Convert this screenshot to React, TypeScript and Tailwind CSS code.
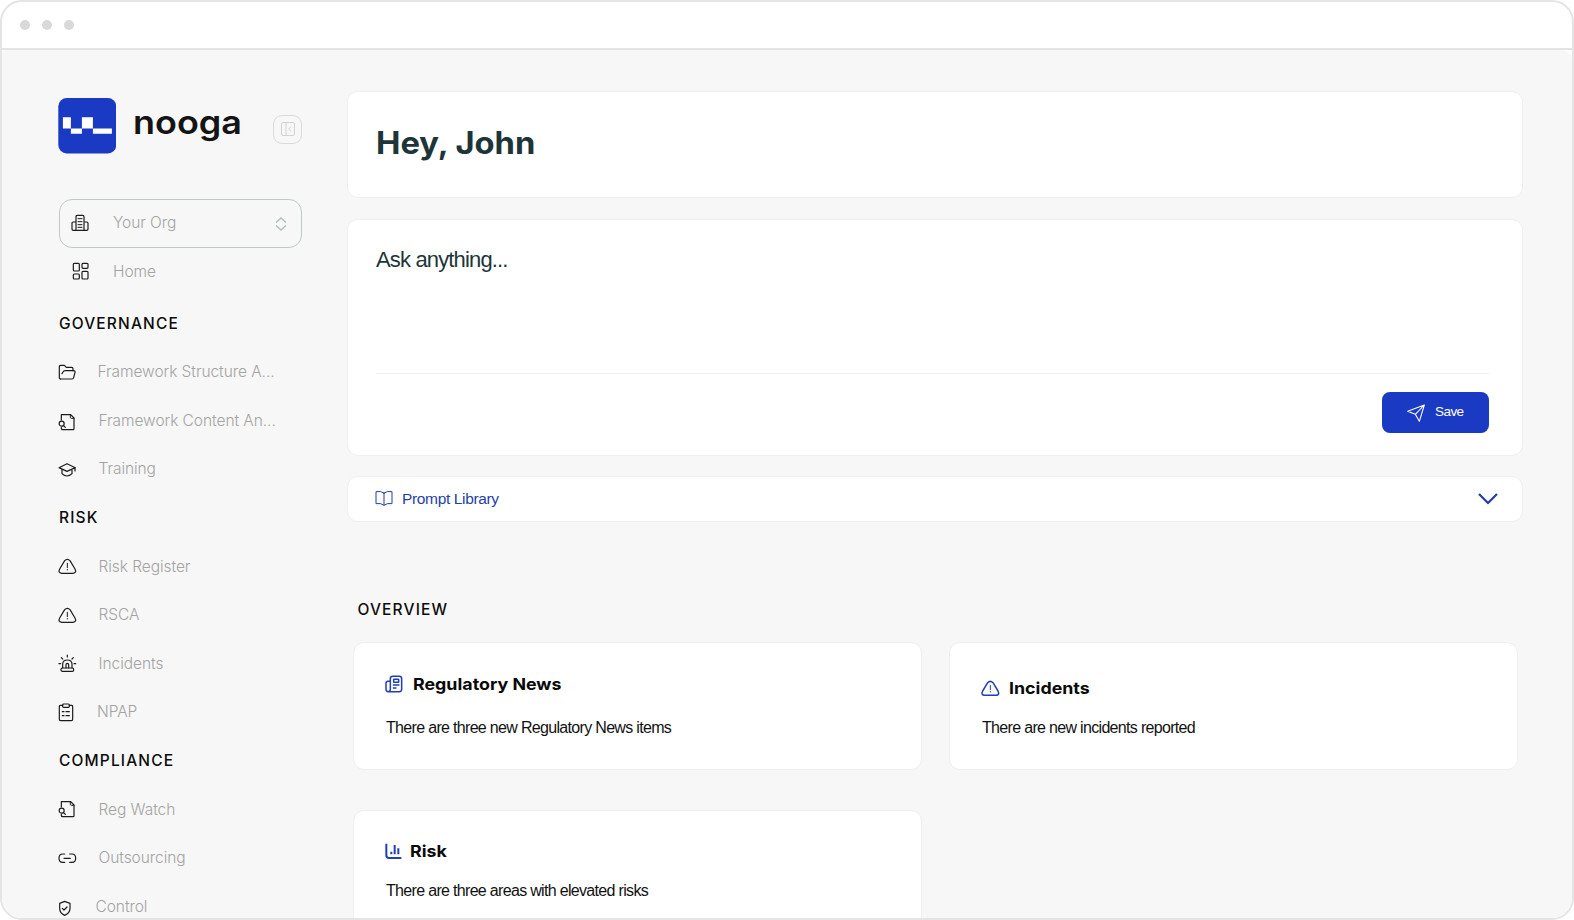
import type { ReactNode } from "react";
import clsx from "clsx";

function Icon({ children, className }: { children: ReactNode; className?: string }) {
    return (
        <svg
            viewBox="0 0 54 54"
            fill="none"
            stroke="currentColor"
            strokeWidth="3.6"
            strokeLinecap="round"
            strokeLinejoin="round"
            className={clsx("size-[18px] shrink-0 overflow-visible", className)}
        >
            {children}
        </svg>
    );
}

const BuildingIcon = ({ className }: { className?: string }) => (
    <Icon className={className}>
        <path d="M15 49V8q0-4 4-4h16q4 0 4 4v41M15 24H7q-4 0-4 4v17q0 4 4 4h40q4 0 4-4V28q0-4-4-4h-8" />
        <path d="M21 14h12M21 23h12M21 32h12M21 40h12" strokeWidth="3" />
    </Icon>
);

const HomeIcon = ({ className }: { className?: string }) => (
    <Icon className={className}>
        <rect x="4" y="4" width="18" height="23" rx="3" />
        <rect x="30" y="4" width="18" height="15" rx="3" />
        <rect x="4" y="36" width="18" height="15" rx="3" />
        <rect x="30" y="28" width="18" height="23" rx="3" />
    </Icon>
);

const FolderIcon = () => (
    <Icon>
        <path d="M8 48q-4 0-4-4V11q0-4 4-4h11l6 6h16q4 0 4 4v6" />
        <path d="M12 32l3-5q2-4 6-4h26q5 0 4 5l-4 16q-1 4-5 4H8" />
    </Icon>
);

const FileSearchIcon = ({ className }: { className?: string }) => (
    <Icon className={className}>
        <path d="M10 21V5h28l10 10v32q0 3-3 3H14q-4 0-4-4v-3" />
        <path d="M37 5v8q0 3 3 3h8" strokeWidth="3" />
        <circle cx="11" cy="32" r="7.5" />
        <path d="M16 37l6 6" />
    </Icon>
);

const CapIcon = () => (
    <Icon>
        <path d="M3 23L27 11l25 12-25 11zM12 28v13q7 7 15 7t15-7V28M51 24v9" />
    </Icon>
);

const WarningIcon = ({ strokeWidth }: { strokeWidth?: number }) => (
    <Icon>
        <path d="M20 11q8-8 16 0l15 25q6 12-6 13H11Q-1 48 5 36z" strokeWidth={strokeWidth} />
        <path d="M28 19v13" strokeWidth="3" />
        <path d="M28 38v.5" />
    </Icon>
);

const SirenIcon = () => (
    <Icon>
        <path d="M14 42V31q0-13 14-13t14 13v11" />
        <rect x="9" y="42" width="38" height="10" rx="4" />
        <path d="M24 42V32q0-4 4-4t4 4v10M28 3v6M10 11l4 4M46 11l-4 4M3 29h5M48 29h5" />
    </Icon>
);

const ClipboardIcon = () => (
    <Icon>
        <path d="M14 7H7q-3 0-3 4v38q0 4 4 4h32q4 0 4-4V11q0-4-3-4h-7" />
        <rect x="14" y="3" width="20" height="10" rx="3" />
        <path d="M13 26h5M24 26h10M13 38h5M24 38h10" />
    </Icon>
);

const LinkIcon = () => (
    <Icon>
        <path d="M20 15h-6q-11 0-11 12.500t11 12.500h6M35 15h7q11 0 11 12.500T42 40h-7M18 28h19" />
    </Icon>
);

const ShieldIcon = () => (
    <Icon>
        <path d="M20 13L5 19v15q0 15 15 21 16-6 16-21V19z" />
        <path d="M13 34l5 5 9-9" />
    </Icon>
);

const NewsIcon = () => (
    <Icon>
        <path
            d="M16 19H9q-6 0-6 6v18q0 7 7 7h33q7 0 7-7V11q0-7-7-7H23q-7 0-7 7v32q0 7-7 7"
            strokeWidth="4.500"
        />
        <rect x="26" y="13" width="15" height="9" rx="1" strokeWidth="4.500" />
        <path d="M25 30h17M25 39h8" strokeWidth="4" />
    </Icon>
);

const ChartIcon = () => (
    <Icon>
        <path d="M4 5v35q0 8 8 8h37" strokeWidth="6" strokeLinecap="butt" />
        <path d="M19 29v8M29 9v28M40 19v18" strokeWidth="6" strokeLinecap="butt" />
    </Icon>
);

function Heading({ children, className }: { children: ReactNode; className?: string }) {
    return (
        <h2
            className={clsx(
                "flex items-center font-['Inter',sans-serif] text-[15.5px] font-medium tracking-[1.15px] text-[#0c0c0c]",
                className
            )}
        >
            {children}
        </h2>
    );
}

interface NavItem {
    label: string;
    icon: ReactNode;
    gap?: string;
}

const sections: { title: string; items: NavItem[] }[] = [
    {
        title: "GOVERNANCE",
        items: [
            { label: "Framework Structure A...", icon: <FolderIcon />, gap: "gap-[21.5px]" },
            { label: "Framework Content An...", icon: <FileSearchIcon className="mt-1" /> },
            { label: "Training", icon: <CapIcon /> },
        ],
    },
    {
        title: "RISK",
        items: [
            { label: "Risk Register", icon: <WarningIcon /> },
            { label: "RSCA", icon: <WarningIcon /> },
            { label: "Incidents", icon: <SirenIcon /> },
            { label: "NPAP", icon: <ClipboardIcon />, gap: "gap-[21px]" },
        ],
    },
    {
        title: "COMPLIANCE",
        items: [
            { label: "Reg Watch", icon: <FileSearchIcon /> },
            { label: "Outsourcing", icon: <LinkIcon /> },
            { label: "Control", icon: <ShieldIcon />, gap: "gap-[19.5px]" },
        ],
    },
];

function Sidebar() {
    return (
        <aside className="w-[345px] shrink-0 pl-14 pt-12 font-['Inter',sans-serif] text-[15.5px] font-light tracking-[-0.06px] text-[#a3a3a3]">
            <div className="flex h-14">
                <svg viewBox="0 0 58 56" className="h-14 w-[58px] shrink-0">
                    <rect x="0.300" width="58" height="55.500" rx="8.500" fill="#1b3ac4" />
                    <path
                        fill="#fff"
                        d="M4.900 19.300h8v11.300h-8zM12.900 30.600h11v5.200h-11zM23.900 19.300h11v11.300h-11zM34.900 30.600h19v5.200h-19z"
                    />
                </svg>
                <span className="ml-[17px] mt-[3.5px] w-[122px] origin-left scale-x-[1.09] text-[33px] font-semibold leading-10 tracking-normal text-[#141414]">
                    nooga
                </span>
                <button className="ml-[18px] mt-[16.5px] flex size-[29px] items-center justify-center rounded-[9px] border border-[#dadada] text-[#d2d2d2]">
                    <svg viewBox="0 0 14 14" fill="none" stroke="currentColor" className="size-3.5">
                        <rect x="0.500" y="0.500" width="13" height="13" rx="1.500" />
                        <path d="M5 .5v13M10.200 4.500L7.700 7l2.500 2.500" />
                    </svg>
                </button>
            </div>

            <button className="ml-px mt-[44.500px] flex h-[49.500px] w-[243px] items-center rounded-[13px] border border-[#bccac8] pl-[11px]">
                <BuildingIcon className="text-[#1c1c1c]" />
                <span className="mb-px ml-6">Your Org</span>
                <svg
                    viewBox="0 0 12 14"
                    fill="none"
                    stroke="#b4bebd"
                    strokeWidth="1.500"
                    className="ml-auto mr-[14px] mt-px h-3.5 w-3"
                >
                    <path d="M1 5.500l5-4.500 5 4.500M1 8.500L6 13l5-4.500" />
                </svg>
            </button>
            <div className="flex h-[49px] items-center pb-px pl-[14px]">
                <HomeIcon className="mb-[3px] text-[#1c1c1c]" />
                <span className="mb-px ml-[23px]">Home</span>
            </div>

            <nav className="pt-0.5">
                {sections.map((section) => (
                    <div key={section.title}>
                        <Heading className="ml-px h-[48.600px]">{section.title}</Heading>
                        {section.items.map((item) => (
                            <div
                                key={item.label}
                                className={clsx("flex h-[48.600px] items-center text-[#1c1c1c]", item.gap ?? "gap-[22.5px]")}
                            >
                                {item.icon}
                                <span className="text-[#a3a3a3]">{item.label}</span>
                            </div>
                        ))}
                    </div>
                ))}
            </nav>
        </aside>
    );
}

interface OverviewCardProps {
    icon: ReactNode;
    title: string;
    text: string;
    padding: string;
    gap: string;
    textMargin: string;
}

function OverviewCard({ icon, title, text, padding, gap, textMargin }: OverviewCardProps) {
    return (
        <div className={clsx("h-32 rounded-[11px] border border-[#efefef] bg-white pl-[30.5px]", padding)}>
            <div className={clsx("flex h-6 items-center text-[#1f3fb5]", gap)}>
                {icon}
                <h3 className="origin-left scale-x-[1.08] font-['Inter',sans-serif] text-[16.5px] font-bold leading-6 text-[#0a0a0a]">
                    {title}
                </h3>
            </div>
            <p className={clsx("ml-[1.5px] text-base leading-6 tracking-[-0.68px] text-[#111]", textMargin)}>{text}</p>
        </div>
    );
}

function Main() {
    return (
        <main className="w-[1176px] shrink-0 pt-[41px] font-['Liberation_Sans',Arial,sans-serif]">
            <section className="h-[107px] rounded-[11px] border border-[#efefef] bg-white pl-7 pt-[31px]">
                <h1 className="origin-left scale-x-[1.055] font-['Inter',sans-serif] text-[31px] font-bold leading-10 text-[#1d3538]">
                    Hey, John
                </h1>
            </section>

            <section className="mt-[21px] flex h-[237px] flex-col rounded-[11px] border border-[#efefef] bg-white pl-7 pr-[33px]">
                <p className="mt-[25px] h-[128px] text-[22px] leading-[30px] tracking-[-0.85px] text-[#1d3538]">
                    Ask anything...
                </p>
                <div className="flex justify-end border-t border-[#f3f3f3] pt-[18px]">
                    <button className="flex h-[41px] w-[107px] items-center rounded-lg bg-[#1b3ac4] pl-[25px] text-white">
                        <Icon>
                            <path d="M2 22L52 3 37 52 25 31zM25 31L52 3" strokeWidth="3.200" />
                        </Icon>
                        <span className="ml-2.5 text-[13.500px] tracking-[-0.55px]">Save</span>
                    </button>
                </div>
            </section>

            <section className="mt-5 flex h-[46px] items-center rounded-[11px] border border-[#efefef] bg-white pl-[27px] pr-6 text-[#1f3fa8]">
                <Icon>
                    <path d="M27 9q-10-7-24-4v36q14-3 24 5 10-8 24-5V5Q37 2 27 9zM27 9v36" strokeWidth="3" />
                </Icon>
                <span className="ml-[9px] text-[15.500px] tracking-[-0.35px]">Prompt Library</span>
                <svg viewBox="0 0 20 12" fill="none" stroke="currentColor" strokeWidth="2.200" className="ml-auto h-3 w-5">
                    <path d="M1 1l9 9 9-9" />
                </svg>
            </section>

            <Heading className="ml-[10.500px] mt-[75.5px] h-6">OVERVIEW</Heading>
            <div className="ml-1.5 mt-5 grid w-[1165px] grid-cols-2 gap-x-[27px] gap-y-10">
                <OverviewCard
                    icon={<NewsIcon />}
                    title="Regulatory News"
                    text="There are three new Regulatory News items"
                    padding="pt-[29px]"
                    gap="gap-2.5"
                    textMargin="mt-5"
                />
                <OverviewCard
                    icon={<WarningIcon strokeWidth={4.5} />}
                    title="Incidents"
                    text="There are new incidents reported"
                    padding="pt-[33px]"
                    gap="gap-2.5"
                    textMargin="mt-4"
                />
                <OverviewCard
                    icon={<ChartIcon />}
                    title="Risk"
                    text="There are three areas with elevated risks"
                    padding="pt-7"
                    gap="gap-[7px]"
                    textMargin="mt-4"
                />
            </div>
        </main>
    );
}

export default function App() {
    return (
        <div className="flex h-[920px] w-[1574px] flex-col overflow-hidden rounded-[22px] border-2 border-[#e4e4e4] bg-white">
            <header className="flex h-12 shrink-0 items-center gap-3 border-b-2 border-[#e4e4e4] pl-[18px]">
                <span className="size-2.5 rounded-full bg-[#d9d9d9]" />
                <span className="size-2.5 rounded-full bg-[#d9d9d9]" />
                <span className="size-2.5 rounded-full bg-[#d9d9d9]" />
            </header>
            <div className="flex min-h-0 flex-1 overflow-hidden rounded-tl-[4px] rounded-tr-[10px] bg-[#f7f7f7]">
                <Sidebar />
                <Main />
            </div>
        </div>
    );
}
